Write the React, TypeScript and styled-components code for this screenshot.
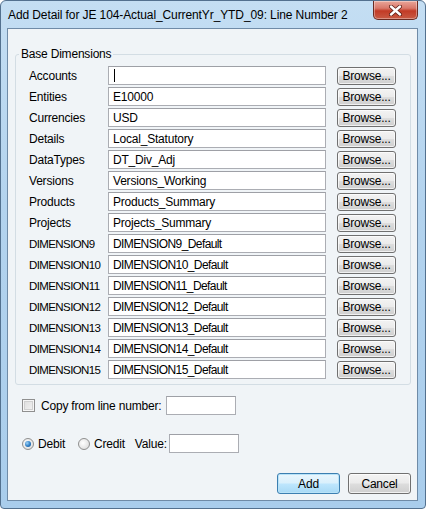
import React from "react";
import styled, { createGlobalStyle, css } from "styled-components";

const GlobalStyle = createGlobalStyle`
  html, body {
    margin: 0;
    padding: 0;
    background: #ffffff;
  }
  body {
    font-family: "Liberation Sans", "Noto Sans", Arial, sans-serif;
    font-size: 12px;
    letter-spacing: -0.2px;
    color: #000;
  }
`;

const Window = styled.div`
  width: 426px;
  height: 509px;
  box-sizing: border-box;
  border: 1px solid #53718f;
  border-radius: 6px 6px 4px 4px;
  background: linear-gradient(180deg, #c4def3 0%, #b3d3ee 40%, #a9cdec 100%);
  display: flex;
  flex-direction: column;
  padding: 0 7px 7px 6px;
`;

const TitleBar = styled.div`
  height: 27px;
  display: flex;
  align-items: flex-start;
  padding-left: 1px;
`;

const Title = styled.div`
  font-size: 12px;
  line-height: 12px;
  margin-top: 8px;
  white-space: nowrap;
  letter-spacing: -0.1px;
`;

const CloseButton = styled.div`
  margin-left: auto;
  width: 45px;
  height: 19px;
  box-sizing: border-box;
  border: 1px solid #6b2b22;
  border-top: none;
  border-radius: 0 0 5px 5px;
  background: linear-gradient(180deg, #e9a699 0%, #d9786a 40%, #c23b26 55%, #c85a44 100%);
  box-shadow: inset 0 0 0 1px rgba(255, 255, 255, 0.35);
  display: flex;
  align-items: center;
  justify-content: center;
`;

const Client = styled.div`
  flex: 1;
  border: 1px solid #6f8ba7;
  background: #f0f4f7;
  display: flex;
  flex-direction: column;
  padding: 19px 6px 0 7px;
`;

const Group = styled.fieldset`
  margin: 0;
  border: 1px solid #d3dde4;
  border-radius: 3px;
  padding: 6px 13px 5px 13px;
  display: grid;
  grid-template-columns: 79px 218px 70px;
  row-gap: 2px;
  align-items: center;
`;

const Legend = styled.legend`
  padding: 0 2px;
  margin-left: -10px;
  font-size: 12px;
  line-height: 12px;
`;

const Label = styled.div<{ $caps?: boolean }>`
  white-space: nowrap;
  ${(p) =>
    p.$caps &&
    css`
      font-size: 11.5px;
      letter-spacing: -0.6px;
    `}
`;

const Field = styled.div<{ $w?: number; $caps?: boolean }>`
  height: 19px;
  box-sizing: border-box;
  width: ${(p) => (p.$w ? `${p.$w}px` : "auto")};
  flex-shrink: 0;
  border: 1px solid #abadb3;
  border-top-color: #9ea0a6;
  background: #ffffff;
  display: flex;
  align-items: center;
  padding-left: 4px;
  white-space: nowrap;
  overflow: hidden;
  letter-spacing: ${(p) => (p.$caps ? "-0.6px" : "-0.2px")};
`;

const Caret = styled.span`
  display: block;
  width: 1px;
  height: 13px;
  background: #000;
  margin-left: 1px;
`;

const Button = styled.div<{ $default?: boolean }>`
  box-sizing: border-box;
  border: 1px solid #707070;
  border-radius: 3px;
  background: linear-gradient(180deg, #f3f3f3 0%, #ebebeb 48%, #dddddd 52%, #cfcfcf 100%);
  box-shadow: inset 0 0 0 1px rgba(255, 255, 255, 0.7);
  display: flex;
  align-items: center;
  justify-content: center;
  white-space: nowrap;
  ${(p) =>
    p.$default &&
    css`
      border-color: #3c7fb1;
      background: linear-gradient(180deg, #eaf6fd 0%, #d9f0fc 48%, #bee6fd 52%, #a7d9f5 100%);
      box-shadow: inset 0 0 0 1px #b9e3f8;
    `}
`;

const BrowseButton = styled(Button)`
  height: 18px;
  width: 59px;
  margin-left: 11px;
`;

const OptionRow = styled.div<{ $top: number }>`
  display: flex;
  align-items: center;
  margin-top: ${(p) => p.$top}px;
  padding-left: 7px;
  height: 19px;
`;

const CheckBox = styled.div`
  width: 13px;
  height: 13px;
  box-sizing: border-box;
  border: 1px solid #8f8f8f;
  background: linear-gradient(135deg, #dcdcdc 0%, #f4f4f4 100%);
  box-shadow: inset 0 0 0 1px #f6f6f6, inset 0 0 0 2px #d0d0d0;
  margin-right: 6px;
`;

const Radio = styled.div<{ $on?: boolean }>`
  width: 12px;
  height: 12px;
  box-sizing: border-box;
  border-radius: 50%;
  border: 1px solid #8f8f8f;
  background: radial-gradient(circle at 40% 40%, #ffffff 0%, #e2e2e2 70%, #cfcfcf 100%);
  display: flex;
  align-items: center;
  justify-content: center;
  margin-right: 4px;
  &::after {
    content: "";
    display: ${(p) => (p.$on ? "block" : "none")};
    width: 6px;
    height: 6px;
    border-radius: 50%;
    background: radial-gradient(circle at 35% 35%, #9fd3f7 0%, #2b7cc4 55%, #174f8a 100%);
  }
`;

const OptionText = styled.span<{ $gap?: number; $w?: number }>`
  margin-right: ${(p) => p.$gap ?? 0}px;
  white-space: nowrap;
  flex-shrink: 0;
  ${(p) => p.$w && `width: ${p.$w}px;`}
`;

const Footer = styled.div`
  margin-top: auto;
  display: flex;
  justify-content: flex-end;
  gap: 8px;
  padding-bottom: 6px;
`;

const FooterButton = styled(Button)`
  width: 63px;
  height: 21px;
`;

const rows: Array<[string, string]> = [
  ["Accounts", ""],
  ["Entities", "E10000"],
  ["Currencies", "USD"],
  ["Details", "Local_Statutory"],
  ["DataTypes", "DT_Div_Adj"],
  ["Versions", "Versions_Working"],
  ["Products", "Products_Summary"],
  ["Projects", "Projects_Summary"],
  ["DIMENSION9", "DIMENSION9_Default"],
  ["DIMENSION10", "DIMENSION10_Default"],
  ["DIMENSION11", "DIMENSION11_Default"],
  ["DIMENSION12", "DIMENSION12_Default"],
  ["DIMENSION13", "DIMENSION13_Default"],
  ["DIMENSION14", "DIMENSION14_Default"],
  ["DIMENSION15", "DIMENSION15_Default"],
];

const isCaps = (s: string) => /^[A-Z0-9_]+$/.test(s);

export default function App() {
  return (
    <>
      <GlobalStyle />
      <Window>
        <TitleBar>
          <Title>Add Detail for JE 104-Actual_CurrentYr_YTD_09: Line Number 2</Title>
          <CloseButton>
            <svg width="13" height="11" viewBox="0 0 13 11">
              <path
                d="M2 1.5 L11 9.5 M11 1.5 L2 9.5"
                stroke="#5a1a12"
                strokeWidth="4"
                strokeLinecap="round"
              />
              <path
                d="M2 1.5 L11 9.5 M11 1.5 L2 9.5"
                stroke="#ffffff"
                strokeWidth="2.4"
                strokeLinecap="round"
              />
            </svg>
          </CloseButton>
        </TitleBar>
        <Client>
          <Group>
            <Legend>Base Dimensions</Legend>
            {rows.map(([label, value], i) => (
              <React.Fragment key={label}>
                <Label $caps={isCaps(label)}>{label}</Label>
                <Field $caps={value.startsWith("DIMENSION")}>
                  {i === 0 ? <Caret /> : value}
                </Field>
                <BrowseButton>Browse...</BrowseButton>
              </React.Fragment>
            ))}
          </Group>

          <OptionRow $top={11}>
            <CheckBox />
            <OptionText $w={125}>Copy from line number:</OptionText>
            <Field $w={70} />
          </OptionRow>

          <OptionRow $top={19}>
            <Radio $on />
            <OptionText $gap={13}>Debit</OptionText>
            <Radio />
            <OptionText $gap={10}>Credit</OptionText>
            <OptionText $gap={2}>Value:</OptionText>
            <Field $w={70} />
          </OptionRow>

          <Footer>
            <FooterButton $default>Add</FooterButton>
            <FooterButton>Cancel</FooterButton>
          </Footer>
        </Client>
      </Window>
    </>
  );
}
